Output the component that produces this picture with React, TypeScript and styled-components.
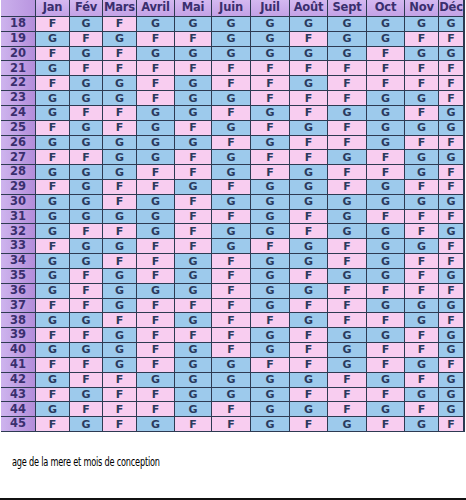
import styled, { createGlobalStyle } from 'styled-components';

const GlobalStyle = createGlobalStyle`
    html, body {
        margin: 0;
        padding: 0;
        background: #ffffff;
    }
`;

const months = ['Jan', 'Fév', 'Mars', 'Avril', 'Mai', 'Juin', 'Juil', 'Août', 'Sept', 'Oct', 'Nov', 'Déc'];

// age -> result for each month (F = fille, G = garçon)
const chart: [number, string][] = [
    [18, 'FGFGGGGGGGGG'],
    [19, 'GFGFFGGFGGFF'],
    [20, 'FGFGGGGGGFGG'],
    [21, 'GFFFFFFFFFFF'],
    [22, 'FGGFGFFGFFFF'],
    [23, 'GGGFGGFFFGGF'],
    [24, 'GFFGGFGFGGFG'],
    [25, 'FGFGFGFGFGGG'],
    [26, 'GGGGGFGFFGFF'],
    [27, 'FFGGFGFFGFGG'],
    [28, 'GGGFFGFGFFGF'],
    [29, 'FGFFGFGGFGFF'],
    [30, 'GGFGFGGGGGGG'],
    [31, 'GGGGFFGFGFFF'],
    [32, 'GFFGFGGFGGFG'],
    [33, 'FGGFFGFGFGGF'],
    [34, 'GGFFGFGGFGFF'],
    [35, 'GFGFGFGFGGFG'],
    [36, 'GFGGGFGGFFFF'],
    [37, 'FFGFFFGFFGGG'],
    [38, 'GGFFGFFGFFGF'],
    [39, 'FFGFFFGFGGFG'],
    [40, 'GGGFGFGFGFFG'],
    [41, 'FFGFGGFFGFGF'],
    [42, 'GFFGGGGGFGFG'],
    [43, 'FGFFGGGFFFGG'],
    [44, 'GFFFGFGGFGFG'],
    [45, 'FGFGFFGFGFGF'],
];

const Page = styled.div`
    width: 466px;
    height: 500px;
    box-sizing: border-box;
    border-bottom: 2px solid #111111;
    display: flex;
    flex-direction: column;
    overflow: hidden;
`;

const Chart = styled.div`
    margin-left: 1px;
    width: 463px;
    height: 431px;
    display: grid;
    grid-template-columns: 34px 33px 32px 33px 37px 36px 38px 38px 37px 38px 37px 33px 24px;
    grid-template-rows: 16px repeat(28, 1fr);
    gap: 1px;
    background: #2d3a52;
    border-right: 1px solid #2d3a52;
    border-bottom: 1px solid #2d3a52;
`;

const Cell = styled.div`
    display: flex;
    align-items: center;
    justify-content: center;
    font-family: 'DejaVu Sans', Verdana, sans-serif;
    font-weight: bold;
    line-height: 1;
    overflow: hidden;
    white-space: nowrap;
`;

const CornerCell = styled(Cell)`
    background: linear-gradient(to right, #cbb0ec, #b995e0);
`;

const HeadCell = styled(Cell)`
    background: linear-gradient(to bottom, #d4b8f0, #c4a2e6);
    color: #3a2f6e;
    font-size: 11.5px;
    letter-spacing: -0.2px;
`;

const AgeCell = styled(Cell)`
    background: linear-gradient(to right, #ceb4ee, #b38dda);
    color: #3a2f6e;
    font-size: 11.5px;
`;

const ResultCell = styled(Cell)<{ $kind: string }>`
    background: ${props => (props.$kind === 'G' ? '#9dcaec' : '#f8cdf0')};
    color: #2a3a5e;
    font-size: 11px;
`;

const Caption = styled.p`
    margin: 22px 0 0 12px;
    width: max-content;
    font-family: 'DejaVu Sans Condensed', 'Liberation Sans Narrow', sans-serif;
    font-size: 13px;
    line-height: 16px;
    color: #000000;
    letter-spacing: -0.3px;
    transform: scaleX(0.7);
    transform-origin: left center;
`;

export default function App() {
    return (
        <>
            <GlobalStyle />
            <Page>
                <Chart>
                    <CornerCell />
                    {months.map(m => (
                        <HeadCell key={m}>{m}</HeadCell>
                    ))}
                    {chart.map(([age, row]) => (
                        <Row key={age} age={age} row={row} />
                    ))}
                </Chart>
                <Caption>age de la mere et mois de conception</Caption>
            </Page>
        </>
    );
}

const Row = ({ age, row }: { age: number; row: string }) => (
    <>
        <AgeCell>{age}</AgeCell>
        {row.split('').map((v, i) => (
            <ResultCell key={i} $kind={v}>
                {v}
            </ResultCell>
        ))}
    </>
);
